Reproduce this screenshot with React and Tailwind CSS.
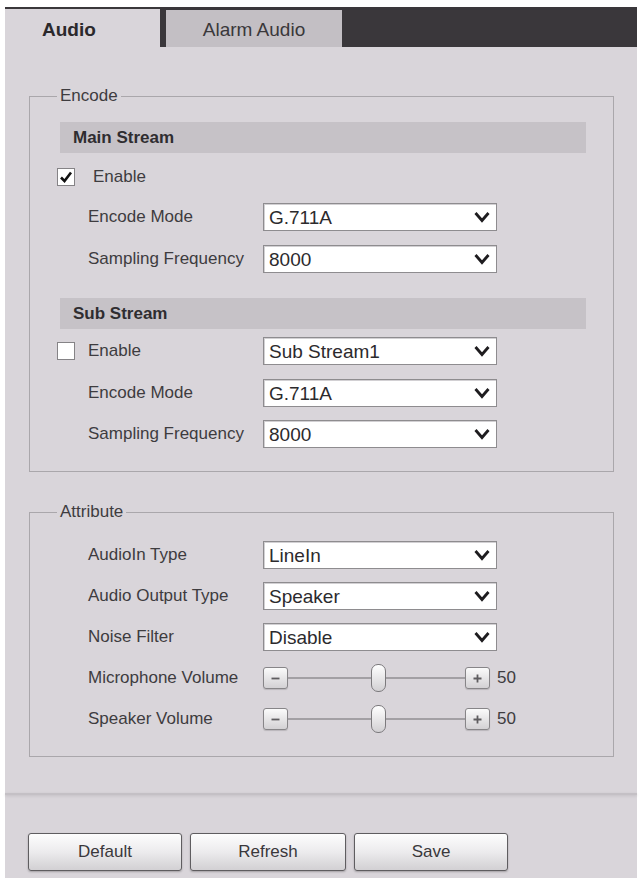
import React from "react";

const label = "w-[175px] shrink-0 text-[17px] text-[#3e3c3f]";

function Chevron() {
  return (
    <svg width="18" height="12" viewBox="0 0 18 12" className="shrink-0">
      <path d="M2.5 2 L9 9.5 L15.5 2" fill="none" stroke="#1e1c1f" strokeWidth="2.8" strokeLinejoin="miter" />
    </svg>
  );
}

function Select({ value }) {
  return (
    <div className="flex h-[28px] w-[234px] items-center justify-between border border-[#8e8c8f] bg-white pl-[5px] pr-[5px] text-[19px] leading-none text-[#2c2a2d] shadow-[inset_1px_1px_0_#d2d0d3]">
      <span>{value}</span>
      <Chevron />
    </div>
  );
}

function Field({ name, value }) {
  return (
    <div className="flex h-[28px] items-center pl-[28px]">
      <span className={label}>{name}</span>
      <Select value={value} />
    </div>
  );
}

function Checkbox({ checked }) {
  return (
    <div className="flex h-[18px] w-[18px] shrink-0 items-center justify-center border border-[#858386] bg-white">
      {checked && (
        <svg width="14" height="14" viewBox="0 0 14 14">
          <path d="M2 7.5 L5.5 11 L12 2.5" fill="none" stroke="#111" strokeWidth="2.6" />
        </svg>
      )}
    </div>
  );
}

function StreamBar({ title }) {
  return (
    <div className="flex h-[31px] items-center bg-[#c6c2c7] pl-[13px] text-[17px] font-bold text-[#2f2d30]">
      {title}
    </div>
  );
}

function StepButton({ plus }) {
  return (
    <div className="flex h-[22px] w-[25px] shrink-0 items-center justify-center rounded-[3px] border border-[#878588] bg-gradient-to-b from-[#fbfbfb] to-[#d3d1d4] shadow-[0_1px_1px_rgba(0,0,0,0.15)]">
      <svg width="11" height="11" viewBox="0 0 11 11">
        <path d={plus ? "M1.5 5.5 H9.5 M5.5 1.5 V9.5" : "M1.5 5.5 H9.5"} stroke="#5e5c5f" strokeWidth="1.8" />
      </svg>
    </div>
  );
}

function Volume({ name, value }) {
  return (
    <div className="flex h-[28px] items-center pl-[28px]">
      <span className={label}>{name}</span>
      <div className="flex items-center">
        <StepButton />
        <div className="h-[2px] w-[83px] bg-[#a3a0a4]" />
        <div className="h-[28px] w-[15px] rounded-[7px] border border-[#7c7a7d] bg-gradient-to-b from-white to-[#d2d0d3]" />
        <div className="h-[2px] w-[79px] bg-[#a3a0a4]" />
        <StepButton plus />
        <span className="ml-[7px] text-[17px] text-[#3e3c3f]">{value}</span>
      </div>
    </div>
  );
}

function Group({ title, className, children }) {
  return (
    <fieldset className={`border border-[#aaa7ab] pl-[30px] pr-[27px] ${className}`}>
      <legend className="-ml-[3px] px-[3px] text-[17px] leading-[20px] text-[#3e3c3f]">{title}</legend>
      {children}
    </fieldset>
  );
}

function Button({ children, w }) {
  return (
    <button className={`${w} h-[38px] rounded-[3px] border border-[#5f5d60] bg-gradient-to-b from-[#fdfdfd] via-[#ecebed] to-[#d2d0d3] text-[17px] text-[#3a383b] shadow-[0_1px_2px_rgba(0,0,0,0.25)]`}>
      {children}
    </button>
  );
}

export default function App() {
  return (
    <div className="h-[881px] w-[642px] bg-white px-[5px] pt-[7px]" style={{ fontFamily: '"Liberation Sans", Arial, sans-serif' }}>
      <div className="h-[871px] bg-[#d9d5da]">
        <div className="flex h-[40px] items-end gap-[6px] bg-[#3a373b]">
          <div className="flex h-[38px] w-[155px] items-center bg-[#d9d5da] pl-[37px] pt-[5px] text-[19px] font-bold text-[#2b292c]">
            Audio
          </div>
          <div className="flex h-[37px] w-[176px] items-center justify-center bg-[#c3bfc4] pt-[4px] text-[19px] text-[#3a383b]">
            Alarm Audio
          </div>
        </div>

        <div className="pl-[24px] pr-[23px] pt-[39px]">
          <Group title="Encode" className="pb-[23px] pt-[16px]">
            <StreamBar title="Main Stream" />
            <div className="mt-[10px] flex h-[28px] items-center">
              <div className="-ml-[3px]">
                <Checkbox checked />
              </div>
              <span className="ml-[18px] text-[17px] text-[#3e3c3f]">Enable</span>
            </div>
            <div className="mt-[12px] flex flex-col gap-[14px]">
              <Field name="Encode Mode" value="G.711A" />
              <Field name="Sampling Frequency" value="8000" />
            </div>

            <div className="mt-[25px]">
              <StreamBar title="Sub Stream" />
            </div>
            <div className="mt-[8px] flex h-[28px] items-center">
              <div className="-ml-[3px]">
                <Checkbox />
              </div>
              <span className="ml-[13px] w-[175px] text-[17px] text-[#3e3c3f]">Enable</span>
              <Select value="Sub Stream1" />
            </div>
            <div className="mt-[14px] flex flex-col gap-[13px]">
              <Field name="Encode Mode" value="G.711A" />
              <Field name="Sampling Frequency" value="8000" />
            </div>
          </Group>

          <Group title="Attribute" className="mt-[30px] pb-[23px] pt-[19px]">
            <div className="flex flex-col gap-[13px]">
              <Field name="AudioIn Type" value="LineIn" />
              <Field name="Audio Output Type" value="Speaker" />
              <Field name="Noise Filter" value="Disable" />
              <Volume name="Microphone Volume" value="50" />
              <Volume name="Speaker Volume" value="50" />
            </div>
          </Group>
        </div>

        <div className="mt-[36px] h-[2px] bg-[#c4c0c5] shadow-[0_1px_3px_rgba(0,0,0,0.12)]" />

        <div className="flex gap-[8px] pl-[23px] pt-[38px]">
          <Button w="w-[154px]">Default</Button>
          <Button w="w-[156px]">Refresh</Button>
          <Button w="w-[154px]">Save</Button>
        </div>
      </div>
    </div>
  );
}
